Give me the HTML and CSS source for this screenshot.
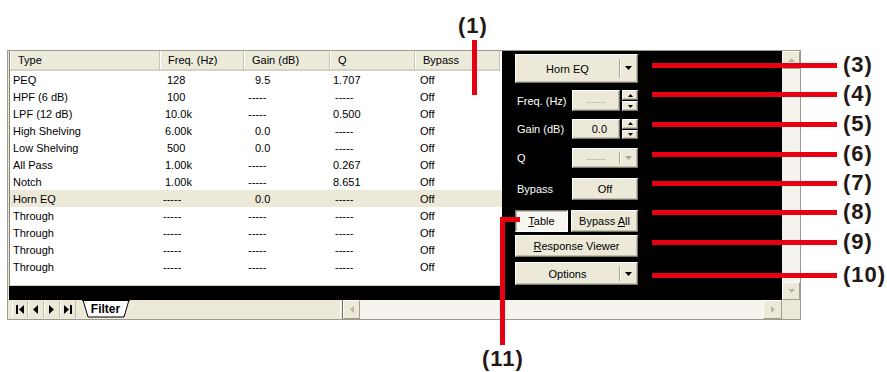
FILE: index.html
```html
<!DOCTYPE html>
<html>

<head>
    <title>Filter Editor</title>
    <link rel="stylesheet" href="styles.css">
</head>

<body>
    <div class="page">
        <div class="window">
            <div class="list-col">
                <div class="list">
                    <div class="head">
                        <div class="hc">Type</div>
                        <div class="hc">Freq. (Hz)</div>
                        <div class="hc">Gain (dB)</div>
                        <div class="hc">Q</div>
                        <div class="hc">Bypass</div>
                    </div>
                    <div class="row"><span class="c-type">PEQ</span><span class="c-freq n">128</span><span class="c-gain n">9.5</span><span class="c-q">1.707</span><span class="c-byp">Off</span></div>
                    <div class="row"><span class="c-type">HPF (6 dB)</span><span class="c-freq n">100</span><span class="c-gain">-----</span><span class="c-q d">-----</span><span class="c-byp">Off</span></div>
                    <div class="row"><span class="c-type">LPF (12 dB)</span><span class="c-freq">10.0k</span><span class="c-gain">-----</span><span class="c-q">0.500</span><span class="c-byp">Off</span></div>
                    <div class="row"><span class="c-type">High Shelving</span><span class="c-freq">6.00k</span><span class="c-gain n">0.0</span><span class="c-q d">-----</span><span class="c-byp">Off</span></div>
                    <div class="row"><span class="c-type">Low Shelving</span><span class="c-freq n">500</span><span class="c-gain n">0.0</span><span class="c-q d">-----</span><span class="c-byp">Off</span></div>
                    <div class="row"><span class="c-type">All Pass</span><span class="c-freq">1.00k</span><span class="c-gain">-----</span><span class="c-q">0.267</span><span class="c-byp">Off</span></div>
                    <div class="row"><span class="c-type">Notch</span><span class="c-freq">1.00k</span><span class="c-gain">-----</span><span class="c-q">8.651</span><span class="c-byp">Off</span></div>
                    <div class="row sel"><span class="c-type">Horn EQ</span><span class="c-freq d">-----</span><span class="c-gain n">0.0</span><span class="c-q d">-----</span><span class="c-byp">Off</span></div>
                    <div class="row"><span class="c-type">Through</span><span class="c-freq d">-----</span><span class="c-gain">-----</span><span class="c-q d">-----</span><span class="c-byp">Off</span></div>
                    <div class="row"><span class="c-type">Through</span><span class="c-freq d">-----</span><span class="c-gain">-----</span><span class="c-q d">-----</span><span class="c-byp">Off</span></div>
                    <div class="row"><span class="c-type">Through</span><span class="c-freq d">-----</span><span class="c-gain">-----</span><span class="c-q d">-----</span><span class="c-byp">Off</span></div>
                    <div class="row"><span class="c-type">Through</span><span class="c-freq d">-----</span><span class="c-gain">-----</span><span class="c-q d">-----</span><span class="c-byp">Off</span></div>
                </div>
            </div>

            <div class="panel">
                <div class="btn combo big">
                    <span class="combo-text">Horn EQ</span>
                    <span class="combo-arrow"><svg width="7" height="4"><polygon points="0,0 7,0 3.5,4" fill="#000"/></svg></span>
                </div>

                <div class="field f-freq">
                    <span class="lbl">Freq. (Hz)</span>
                    <span class="btn box off">-----</span>
                    <span class="spin">
                        <span class="btn"><svg width="5" height="3"><polygon points="0,3 5,3 2.5,0" fill="#000"/></svg></span>
                        <span class="btn"><svg width="5" height="3"><polygon points="0,0 5,0 2.5,3" fill="#000"/></svg></span>
                    </span>
                </div>

                <div class="field f-gain">
                    <span class="lbl">Gain (dB)</span>
                    <span class="btn box right">0.0</span>
                    <span class="spin">
                        <span class="btn"><svg width="5" height="3"><polygon points="0,3 5,3 2.5,0" fill="#000"/></svg></span>
                        <span class="btn"><svg width="5" height="3"><polygon points="0,0 5,0 2.5,3" fill="#000"/></svg></span>
                    </span>
                </div>

                <div class="field f-q">
                    <span class="lbl">Q</span>
                    <span class="btn combo small">
                        <span class="combo-text off">-----</span>
                        <span class="combo-arrow"><svg width="7" height="4"><polygon points="0,0 7,0 3.5,4" fill="#aca899"/></svg></span>
                    </span>
                </div>

                <div class="field f-byp">
                    <span class="lbl">Bypass</span>
                    <span class="btn wide">Off</span>
                </div>

                <div class="pair">
                    <span class="btn down b-table"><span><u>T</u>able</span></span>
                    <span class="btn b-all"><span>Bypass <u>A</u>ll</span></span>
                </div>

                <div class="btn full b-resp"><span><u>R</u>esponse Viewer</span></div>

                <div class="btn combo opt">
                    <span class="combo-text">Options</span>
                    <span class="combo-arrow"><svg width="7" height="4"><polygon points="0,0 7,0 3.5,4" fill="#000"/></svg></span>
                </div>
            </div>

            <div class="vscroll">
                <span class="sbtn"><svg width="7" height="4"><polygon points="0,4 7,4 3.5,0" fill="#b9b6a6"/></svg></span>
                <span class="track"></span>
                <span class="sbtn"><svg width="7" height="4"><polygon points="0,0 7,0 3.5,4" fill="#b9b6a6"/></svg></span>
            </div>

            <div class="bottom">
                <div class="tabs">
                    <span class="nav"><svg width="8" height="9"><rect x="0" y="0" width="2" height="9"/><polygon points="8,0 8,9 3,4.5"/></svg></span>
                    <span class="nav"><svg width="5" height="9"><polygon points="5,0 5,9 0,4.5"/></svg></span>
                    <span class="nav"><svg width="5" height="9"><polygon points="0,0 0,9 5,4.5"/></svg></span>
                    <span class="nav"><svg width="8" height="9"><polygon points="0,0 0,9 5,4.5"/><rect x="6" y="0" width="2" height="9"/></svg></span>
                    <span class="tab">
                        <svg class="tab-bg" width="48" height="18"><polygon points="1,0 47,0 42,17 6,17" fill="#fff" stroke="#000" stroke-width="1"/><rect x="0" y="0" width="48" height="1" fill="#000"/></svg>
                        <b>Filter</b>
                    </span>
                </div>
                <span class="split"></span>
                <span class="sbtn"><svg width="4" height="7"><polygon points="4,0 4,7 0,3.5" fill="#b9b6a6"/></svg></span>
                <span class="track"></span>
                <span class="sbtn"><svg width="4" height="7"><polygon points="0,0 0,7 4,3.5" fill="#b9b6a6"/></svg></span>
            </div>
            <div class="corner"></div>
        </div>

        <div class="notes">
            <span class="vline n1"></span>
            <span class="tag t1">(1)</span>

            <span class="hline" style="top: 63px"></span>
            <span class="tag side" style="top: 53px">(3)</span>
            <span class="hline" style="top: 92px"></span>
            <span class="tag side" style="top: 82px">(4)</span>
            <span class="hline" style="top: 122px"></span>
            <span class="tag side" style="top: 112px">(5)</span>
            <span class="hline" style="top: 152px"></span>
            <span class="tag side" style="top: 142px">(6)</span>
            <span class="hline" style="top: 181px"></span>
            <span class="tag side" style="top: 171px">(7)</span>
            <span class="hline" style="top: 210px"></span>
            <span class="tag side" style="top: 200px">(8)</span>
            <span class="hline" style="top: 240px"></span>
            <span class="tag side" style="top: 230px">(9)</span>
            <span class="hline" style="top: 273px"></span>
            <span class="tag side" style="top: 263px">(10)</span>

            <span class="elbow-h"></span>
            <span class="vline n11"></span>
            <span class="tag t11">(11)</span>
        </div>
    </div>
</body>

</html>
```

FILE: styles.css
```css
body {
    margin: 0;
    background: #fff;
    color: #000;
    font-family: "Liberation Sans", Arial, sans-serif;
    font-size: 11px;
}

.page {
    position: relative;
    width: 887px;
    height: 372px;
    overflow: hidden;
}

.window {
    margin: 50px 0 0 7px;
    width: 792px;
    border: 1px solid #9d9b8f;
    background: #ece9d8;
    display: grid;
    grid-template-columns: 494px 280px 18px;
    grid-template-rows: 249px 19px;
}

/* ----- list ----- */

.list-col {
    background: #000;
    padding-left: 1px;
    background-clip: content-box;
    box-shadow: inset 1px 0 #ece9d8;
}

.list {
    height: 235px;
    background: #fff;
    border-left: 1px solid #848278;
    border-bottom: 1px solid #d6d3c6;
    box-sizing: border-box;
}

.head,
.row {
    display: grid;
    grid-template-columns: 150px 84px 86px 85px 85px;
}

.hc {
    height: 20px;
    line-height: 19px;
    padding-left: 8px;
    background: #ebeadb;
    border-right: 1px solid #c7c5b2;
    border-bottom: 2px solid #d6d2c2;
    box-shadow: inset 1px 0 #fff;
    box-sizing: border-box;
}

.row {
    height: 17px;
    line-height: 19px;
    white-space: nowrap;
}

.row.sel {
    background: #ece9d8;
}

.c-type { padding-left: 3px; }
.c-freq { padding-left: 5px; }
.c-freq.n { padding-left: 7px; }
.c-freq.d { padding-left: 3px; }
.c-gain { padding-left: 4px; }
.c-gain.n { padding-left: 11px; }
.c-q { padding-left: 3px; }
.c-q.d { padding-left: 5px; }
.c-byp { padding-left: 5px; }

/* ----- control panel ----- */

.panel {
    background: #000;
    padding: 3px 0 0 13px;
    display: flex;
    flex-direction: column;
}

.btn {
    display: flex;
    align-items: center;
    justify-content: center;
    background: #ece9d8;
    border: 1px solid;
    border-color: #fff #7a786d #7a786d #fff;
    box-shadow: inset -1px -1px #c2bfae;
    box-sizing: border-box;
    color: #000;
    white-space: nowrap;
}

.btn.down {
    background: #f7f6f1;
    border-color: #7a786d #fff #fff #7a786d;
    box-shadow: inset 1px 1px #c2bfae;
}

.combo {
    width: 123px;
}

.combo.big { height: 29px; }
.combo.opt { height: 23px; margin-top: 5px; }

.combo.small {
    width: 66px;
    height: 20px;
}

.combo-text {
    flex: 1;
    text-align: center;
}

.combo-arrow {
    width: 17px;
    height: 70%;
    display: flex;
    align-items: center;
    justify-content: center;
    border-left: 1px solid #aca899;
    box-shadow: inset 1px 0 #fff;
}

.off {
    color: #b5b2a2;
}

.field {
    display: flex;
    align-items: stretch;
}

.lbl {
    width: 57px;
    color: #fff;
    display: flex;
    align-items: center;
    padding-left: 2px;
    box-sizing: border-box;
}

.f-freq { height: 21px; margin-top: 7px; }
.f-gain { height: 20px; margin-top: 8px; }
.f-q { height: 20px; margin-top: 9px; }
.f-byp { height: 22px; margin-top: 10px; }

.box {
    width: 48px;
}

.box.right {
    justify-content: flex-end;
    padding-right: 12px;
}

.spin {
    width: 16px;
    margin-left: 2px;
    display: flex;
    flex-direction: column;
    gap: 1px;
}

.spin .btn {
    flex: 1;
}

.wide {
    width: 66px;
}

.pair {
    display: flex;
    gap: 3px;
    height: 22px;
    margin-top: 10px;
}

.b-table { width: 53px; }
.b-all { width: 67px; }

.full {
    width: 123px;
    height: 22px;
}

.b-resp { margin-top: 3px; }

/* ----- scrollbars and tabs ----- */

.vscroll {
    display: flex;
    flex-direction: column;
}

.sbtn {
    flex: none;
    width: 18px;
    height: 18px;
    display: flex;
    align-items: center;
    justify-content: center;
    background: #ece9d8;
    border: 1px solid;
    border-color: #fff #a09d90 #a09d90 #fff;
    box-sizing: border-box;
}

.track {
    flex: 1;
    background: repeating-conic-gradient(#efede4 0 25%, #faf9f5 0 50%) 0 0 / 2px 2px;
}

.bottom {
    grid-column: 1 / 3;
    display: flex;
}

.bottom .sbtn {
    width: 17px;
    height: 19px;
}

.bottom .sbtn:last-child {
    width: 19px;
}

.tabs {
    width: 332px;
    display: flex;
    align-items: flex-start;
    padding-left: 4px;
    box-sizing: border-box;
}

.nav {
    width: 16px;
    height: 17px;
    margin-top: 1px;
    display: flex;
    align-items: center;
    justify-content: center;
    border-right: 1px solid #c2bfae;
    box-shadow: inset 1px 0 #fff;
    box-sizing: border-box;
}

.tab {
    position: relative;
    width: 48px;
    height: 18px;
    margin-left: 6px;
    display: flex;
    align-items: center;
    justify-content: center;
}

.tab-bg {
    position: absolute;
    left: 0;
    top: 0;
}

.tab b {
    position: relative;
    font-size: 12px;
    margin-right: 1px;
}

.split {
    width: 3px;
    border-left: 1px solid #fff;
    border-right: 1px solid #6e6c63;
    box-sizing: border-box;
}

.corner {
    background: #ece9d8;
}

/* ----- callouts ----- */

.notes {
    position: absolute;
    left: 0;
    top: 0;
    right: 0;
    bottom: 0;
    pointer-events: none;
}

.hline {
    position: absolute;
    left: 652px;
    width: 185px;
    height: 5px;
    background: #e60012;
}

.vline {
    position: absolute;
    width: 5px;
    background: #e60012;
}

.vline.n1 {
    left: 472px;
    top: 40px;
    height: 55px;
}

.vline.n11 {
    left: 500px;
    top: 217px;
    height: 128px;
}

.elbow-h {
    position: absolute;
    left: 500px;
    top: 217px;
    width: 20px;
    height: 5px;
    background: #e60012;
}

.tag {
    position: absolute;
    font-family: "Liberation Sans", Arial, sans-serif;
    font-weight: bold;
    font-size: 22px;
    letter-spacing: 1px;
    line-height: 24px;
    color: #231815;
}

.tag.side { left: 843px; }
.tag.t1 { left: 458px; top: 14px; }
.tag.t11 { left: 482px; top: 347px; }
```
